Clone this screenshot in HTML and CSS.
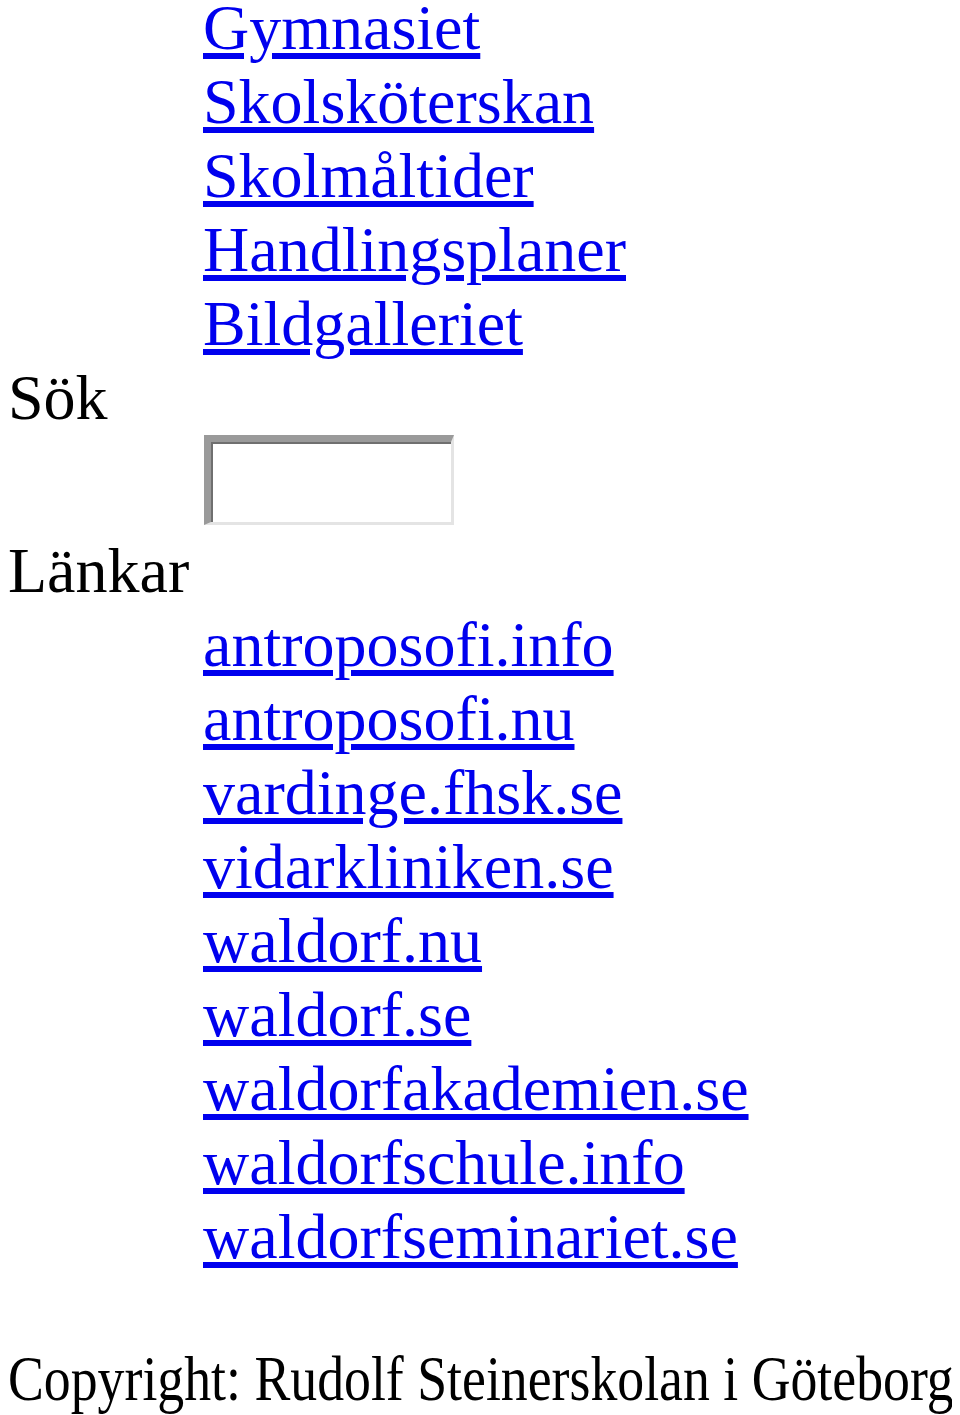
FILE: index.html
```html
<!DOCTYPE html>
<html lang="sv">
<head>
<meta charset="utf-8">
<title>Rudolf Steinerskolan i Göteborg</title>
<link rel="stylesheet" href="styles.css">
</head>
<body>
<div class="page">
  <ul class="links">
    <li><a href="#">Gymnasiet</a></li>
    <li><a href="#">Skolsköterskan</a></li>
    <li><a href="#">Skolmåltider</a></li>
    <li><a href="#">Handlingsplaner</a></li>
    <li><a href="#">Bildgalleriet</a></li>
  </ul>
  <div class="label">Sök</div>
  <form class="search">
    <input class="search-input" type="text" aria-label="Sök">
  </form>
  <div class="label">Länkar</div>
  <ul class="links">
    <li><a href="#">antroposofi.info</a></li>
    <li><a href="#">antroposofi.nu</a></li>
    <li><a href="#">vardinge.fhsk.se</a></li>
    <li><a href="#">vidarkliniken.se</a></li>
    <li><a href="#">waldorf.nu</a></li>
    <li><a href="#">waldorf.se</a></li>
    <li><a href="#">waldorfakademien.se</a></li>
    <li><a href="#">waldorfschule.info</a></li>
    <li><a href="#">waldorfseminariet.se</a></li>
  </ul>
  <div class="footer">Copyright: Rudolf Steinerskolan i Göteborg</div>
</div>
</body>
</html>
```

FILE: styles.css
```css
html, body {
  background: #ffffff;
}
body {
  margin: 0 8px;
  font-family: "Liberation Serif", "Times New Roman", serif;
  font-size: 64px;
  color: #000000;
  overflow: hidden;
}
.page {
  margin-top: -9px;
}
.links {
  list-style: none;
  margin: 0;
  padding: 0 0 0 195px;
}
.links a {
  color: #0000ee;
  text-decoration: underline;
}
.label {
  margin: 0;
}
.search {
  margin: 0 0 9px 196px;
}
.search-input {
  display: block;
  box-sizing: border-box;
  width: 250px;
  height: 90px;
  margin: 0;
  padding: 0;
  background: #ffffff;
  border-style: solid;
  border-width: 7px 3px 3px 7px;
  border-color: #9a9a9a #e4e4e4 #e4e4e4 #9a9a9a;
  box-shadow: inset 2px 2px 0 #6f6f6f;
  outline: none;
}
.footer {
  margin-top: 68px;
  white-space: nowrap;
  transform: scaleX(0.84);
  transform-origin: 0 0;
}
```
